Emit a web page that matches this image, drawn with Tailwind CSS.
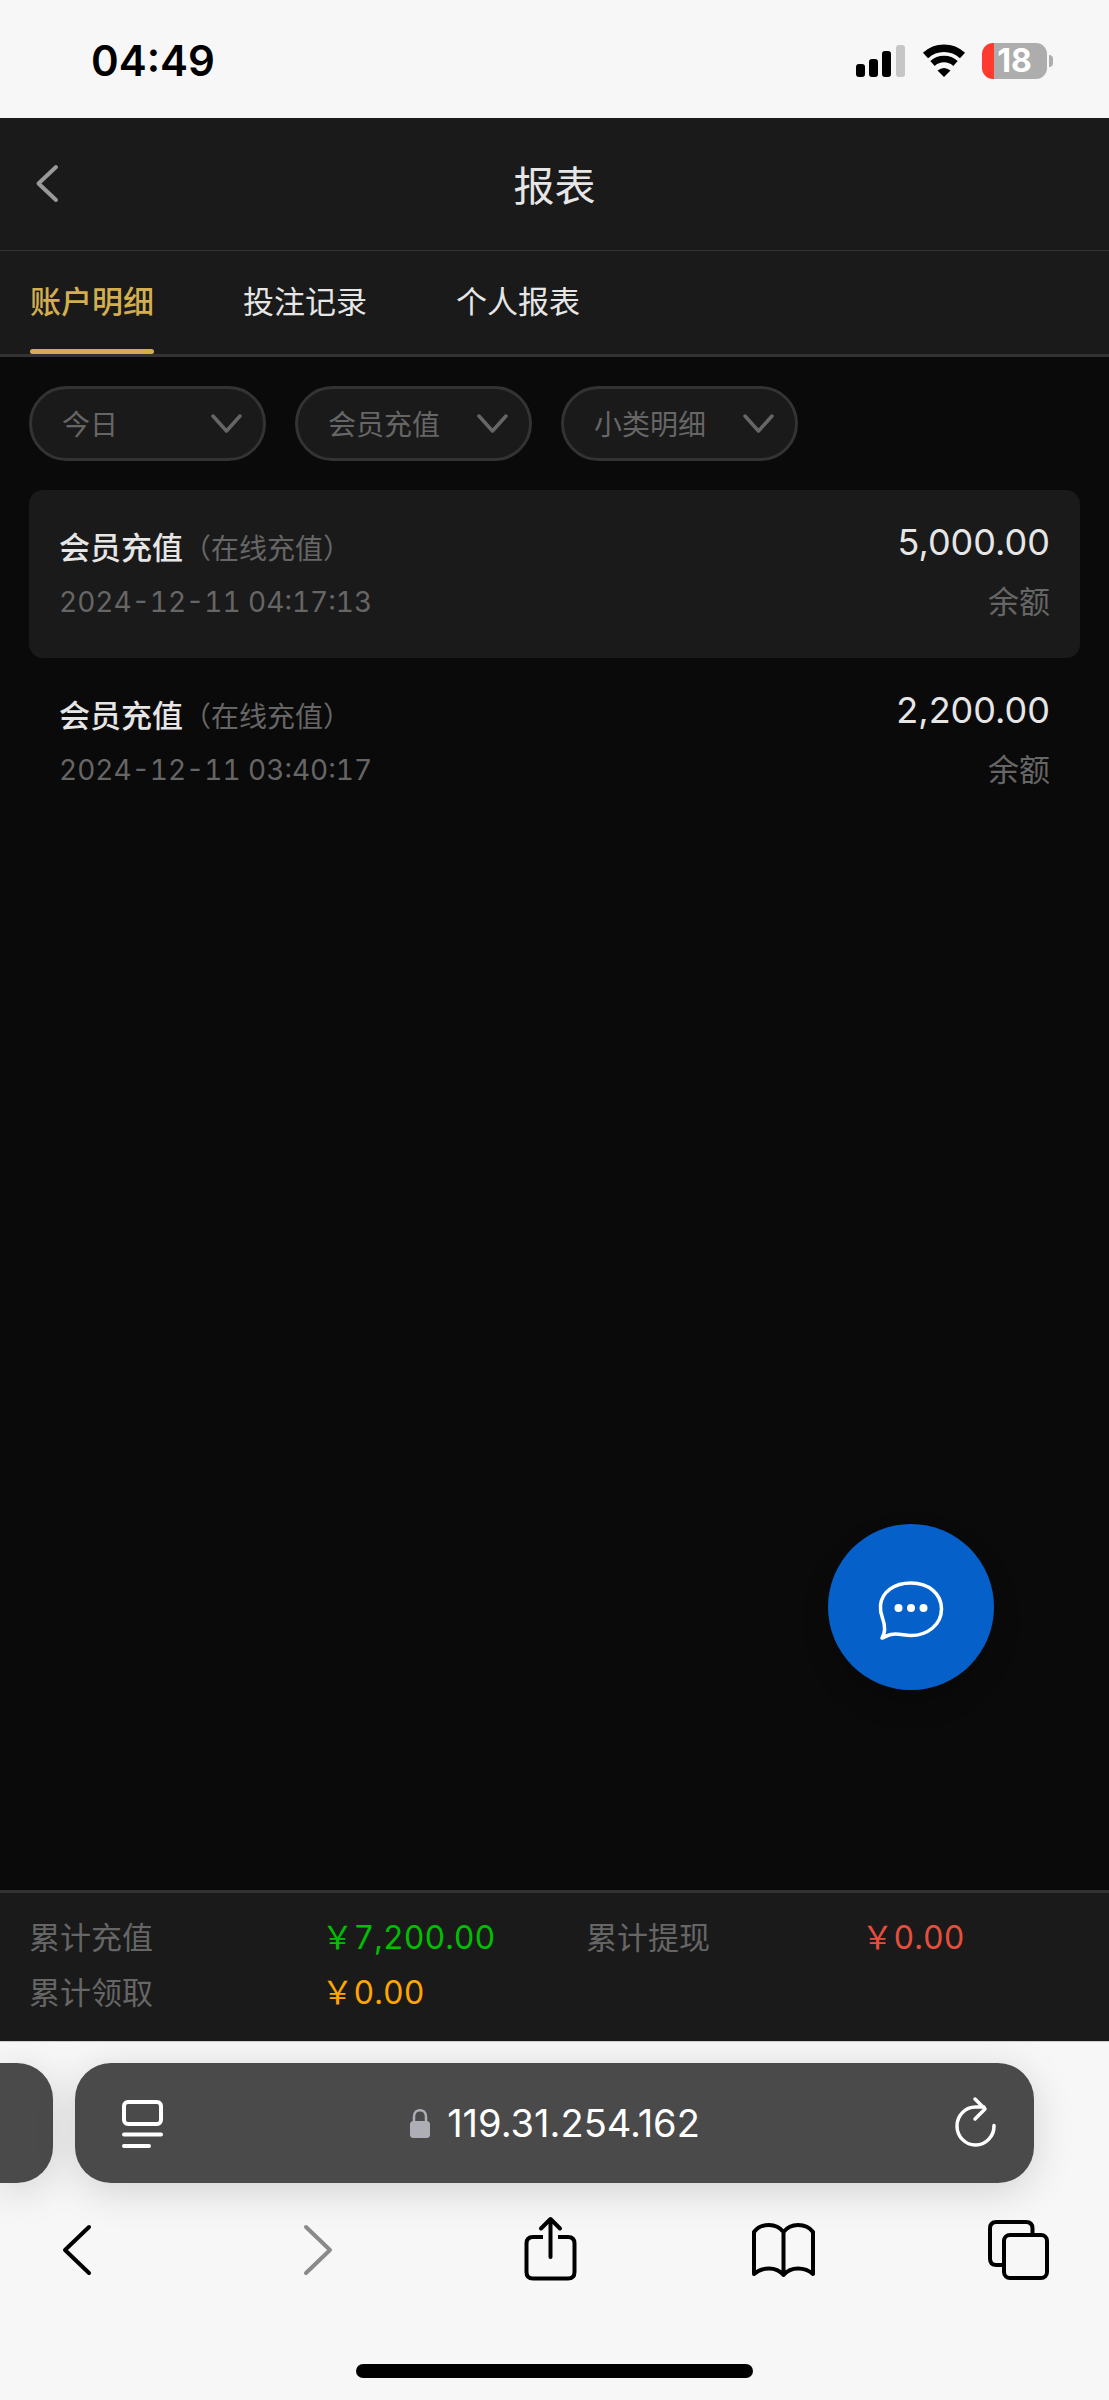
<!DOCTYPE html>
<html lang="zh-CN">
<head>
<meta charset="utf-8">
<meta name="viewport" content="width=device-width, initial-scale=1">
<title>报表</title>
<script src="https://cdn.jsdelivr.net/npm/@tailwindcss/browser@4"></script>
</head>
<body class="flex min-h-screen flex-col overflow-x-hidden bg-[#0a0a0a] font-['Inter','Noto_Sans_CJK_SC',sans-serif] text-[31px] text-[#e6e6e6]">

<!-- Phone status bar -->
<div class="flex h-[118px] items-center justify-between bg-[#f7f7f7] pt-[3px] pr-14 pl-[91px] text-black">
  <time class="text-[42px] leading-[60px] font-semibold">04:49</time>
  <div class="flex items-center gap-4">
    <svg class="h-9 w-[51px]" viewBox="0 0 51 36" aria-label="信号">
      <rect x="1" y="21" width="9" height="13" rx="3"/>
      <rect x="14" y="16" width="9" height="18" rx="3"/>
      <rect x="27" y="8" width="9" height="26" rx="3"/>
      <rect x="41" y="2" width="9" height="32" rx="3" fill="#c6c6c6"/>
    </svg>
    <svg class="h-9 w-11" viewBox="0 0 44 36" aria-label="无线网络">
      <path d="M3.500 12.500A27 27 0 0 1 40.500 12.500" fill="none" stroke="#000" stroke-width="7.500"/>
      <path d="M10.500 20.500A17 17 0 0 1 33.500 20.500" fill="none" stroke="#000" stroke-width="6.500"/>
      <path d="M15.500 27.500Q22 22.500 28.500 27.500L22 34Z"/>
    </svg>
    <div class="flex items-center gap-[2px]">
      <div class="flex h-[36px] w-[65px] items-center justify-center rounded-[11px] bg-linear-to-r from-[#ff3b30] from-18% to-[#adadad] to-18% text-[32px] leading-10 font-bold text-white">18</div>
      <div class="h-3 w-1 rounded-r-full bg-[#adadad]"></div>
    </div>
  </div>
</div>

<!-- Page header -->
<header class="grid h-[133px] grid-cols-[1fr_auto_1fr] items-center border-b border-[#333] bg-[#1a1a1a] px-7">
  <button type="button" aria-label="返回" class="justify-self-start">
    <svg class="h-10 w-10" viewBox="0 0 40 40" fill="none" stroke="#999" stroke-width="4" stroke-linecap="round" stroke-linejoin="round"><path d="M28 3L10.500 19.500L28 36"/></svg>
  </button>
  <h1 class="pt-1 text-[41px] leading-[60px]">报表</h1>
</header>

<nav class="flex h-[106px] gap-[89px] border-b-3 border-[#333] bg-[#1a1a1a] px-[30px] leading-[102px]">
  <a href="#" aria-current="page" class="relative font-medium text-[#d2ae50]">账户明细<span class="absolute inset-x-0 bottom-0 h-[5px] rounded-full bg-[#d2ae50]"></span></a>
  <a href="#">投注记录</a>
  <a href="#">个人报表</a>
</nav>

<main class="relative flex-1 px-[29px] pt-[29px]">
  <form class="flex gap-[29px] text-[28px] text-[#666]">
    <label class="relative">
      <select aria-label="日期" class="h-[75px] w-[237px] appearance-none rounded-full border-3 border-[#333] bg-[#1a1a1a] pt-[2px] pl-[30px]"><option>今日</option></select>
      <svg class="pointer-events-none absolute top-[26px] right-6 h-6 w-8" viewBox="0 0 32 24" fill="none" stroke="#666" stroke-width="3.500" stroke-linecap="round" stroke-linejoin="round"><path d="M3 4L16.500 19L30 4"/></svg>
    </label>
    <label class="relative">
      <select aria-label="类型" class="h-[75px] w-[237px] appearance-none rounded-full border-3 border-[#333] bg-[#1a1a1a] pt-[2px] pl-[30px]"><option>会员充值</option></select>
      <svg class="pointer-events-none absolute top-[26px] right-6 h-6 w-8" viewBox="0 0 32 24" fill="none" stroke="#666" stroke-width="3.500" stroke-linecap="round" stroke-linejoin="round"><path d="M3 4L16.500 19L30 4"/></svg>
    </label>
    <label class="relative">
      <select aria-label="小类" class="h-[75px] w-[237px] appearance-none rounded-full border-3 border-[#333] bg-[#1a1a1a] pt-[2px] pl-[30px]"><option>小类明细</option></select>
      <svg class="pointer-events-none absolute top-[26px] right-6 h-6 w-8" viewBox="0 0 32 24" fill="none" stroke="#666" stroke-width="3.500" stroke-linecap="round" stroke-linejoin="round"><path d="M3 4L16.500 19L30 4"/></svg>
    </label>
  </form>

  <ul class="mt-[29px]">
    <li class="flex h-[168px] justify-between rounded-[14px] bg-[#1a1a1a] px-[30px] pt-6">
      <div class="pt-[7px]">
        <p class="leading-[54px] font-medium">会员充值<span class="text-[28px] font-normal text-[#666]">（在线充值）</span></p>
        <p class="text-[28px] leading-[52px] text-[#666] tabular-nums">2024-12-11 04:17:13</p>
      </div>
      <div class="text-right">
        <p class="text-[36px] leading-[56px]">5,000.00</p>
        <p class="leading-[64px] text-[#666]">余额</p>
      </div>
    </li>
    <li class="flex h-[168px] justify-between rounded-[14px] px-[30px] pt-6">
      <div class="pt-[7px]">
        <p class="leading-[54px] font-medium">会员充值<span class="text-[28px] font-normal text-[#666]">（在线充值）</span></p>
        <p class="text-[28px] leading-[52px] text-[#666] tabular-nums">2024-12-11 03:40:17</p>
      </div>
      <div class="text-right">
        <p class="text-[36px] leading-[56px]">2,200.00</p>
        <p class="leading-[64px] text-[#666]">余额</p>
      </div>
    </li>
  </ul>

  <!-- Floating chat button -->
  <button type="button" aria-label="在线客服" class="absolute right-[115px] bottom-[200px] flex size-[166px] items-center justify-center rounded-full bg-[#0561c9] shadow-[0_14px_28px_rgba(0,0,0,0.2)]">
    <svg class="size-[70px]" viewBox="0 0 70 70" fill="none" stroke="#fff" stroke-width="3.500" stroke-linejoin="round">
      <path d="M6 66C10 60 9 53 6.500 46C4.500 41 4 38 4.500 33C6 20 18 11 35 11C53 11 65.500 22 65.500 37C65.500 53 51 63.500 35 63.500C28 63.500 22 61 15 62.500C11 63.500 9 65 6 66Z"/>
      <g fill="#fff" stroke="none"><circle cx="22.500" cy="36" r="4"/><circle cx="35" cy="36" r="4"/><circle cx="47.500" cy="36" r="4"/></g>
    </svg>
  </button>
</main>

<!-- Totals -->
<footer class="h-[151px] border-t-3 border-[#333] bg-[#1a1a1a] px-[29px] pt-[17px]">
  <dl class="grid grid-cols-[292fr_264fr_275fr_218fr] leading-[55px] text-[#666] tabular-nums">
    <dt>累计充值</dt><dd class="text-[32px] text-[#00bf00]">￥7,200.00</dd>
    <dt>累计提现</dt><dd class="text-[32px] text-[#e84e3c]">￥0.00</dd>
    <dt>累计领取</dt><dd class="text-[32px] text-[#ffa500]">￥0.00</dd>
  </dl>
</footer>

<!-- Browser chrome -->
<div class="h-[359px] overflow-hidden border-t border-[#ccc] bg-[#f7f7f7] pt-[21px] text-black">
  <div class="flex h-[120px] gap-[22px] pr-[75px]">
    <div class="w-[53px] rounded-r-[36px] bg-[#4a4a4a] shadow-[0_8px_40px_rgba(0,0,0,0.15)]"></div>
    <div class="grid flex-1 grid-cols-[1fr_auto_1fr] items-center rounded-[36px] bg-[#4a4a4a] px-9 text-white shadow-[0_8px_40px_rgba(0,0,0,0.15)]">
      <button type="button" aria-label="页面设置" class="justify-self-start">
        <svg class="h-[60px] w-[60px]" viewBox="0 0 60 60" fill="none" stroke="#fff" stroke-width="4" stroke-linecap="round"><rect x="13" y="9" width="37" height="22" rx="4"/><path d="M13 41.500H50M13 53H38"/></svg>
      </button>
      <button type="button" class="flex items-center gap-4 text-[38px] leading-[50px]">
        <svg class="h-[30px] w-[22px]" viewBox="0 0 22 30" fill="none" aria-hidden="true"><rect x="1" y="13" width="20" height="17" rx="3.500" fill="#aeaeb6"/><path d="M5 14V8.500C5 0 17 0 17 8.500V14" stroke="#aeaeb6" stroke-width="2.500"/></svg>
        <span>119.31.254.162</span>
      </button>
      <button type="button" aria-label="刷新" class="justify-self-end">
        <svg class="h-[60px] w-[48px]" viewBox="0 0 48 60" fill="none" stroke="#fff" stroke-width="3.500" stroke-linecap="round" stroke-linejoin="round"><path d="M44 32.500A18.500 19 0 1 1 25.500 14H34M25 6L35 16L25 26"/></svg>
      </button>
    </div>
  </div>
  <div class="mt-[33px] flex justify-between pr-[59px] pl-[45px]">
    <button type="button" aria-label="后退"><svg class="h-[66px] w-16" viewBox="0 0 64 66" fill="none" stroke="#000" stroke-width="4" stroke-linecap="round" stroke-linejoin="round"><path d="M44 11L20 34L44 57"/></svg></button>
    <button type="button" aria-label="前进"><svg class="h-[66px] w-16" viewBox="0 0 64 66" fill="none" stroke="#8a8a8a" stroke-width="4" stroke-linecap="round" stroke-linejoin="round"><path d="M26 11L50 34L26 57"/></svg></button>
    <button type="button" aria-label="分享"><svg class="h-[66px] w-16" viewBox="0 0 64 66" fill="none" stroke="#000" stroke-width="4" stroke-linejoin="round"><path d="M27 21H17Q10.500 21 10.500 27.500V56Q10.500 62.500 17 62.500H52Q58.500 62.500 58.500 56V27.500Q58.500 21 52 21H42"/><path d="M34.500 41V3M25 12.500L34.500 3L44 12.500" stroke-linecap="round"/></svg></button>
    <button type="button" aria-label="书签"><svg class="h-[66px] w-16" viewBox="0 0 64 66" fill="none" stroke="#000" stroke-width="4" stroke-linecap="round" stroke-linejoin="round"><path d="M32.500 16Q27 9 18 9Q8 9 3 16V58Q9 52.500 18 52.500Q27 52.500 32.500 59Q38 52.500 47 52.500Q56 52.500 62 58V16Q57 9 47 9Q38 9 32.500 16V59"/></svg></button>
    <button type="button" aria-label="标签页"><svg class="h-[66px] w-16" viewBox="0 0 64 66" fill="none" stroke="#000" stroke-width="4"><path d="M17 49H10.500Q4 49 4 42.500V12.500Q4 6 10.500 6H40Q46.500 6 46.500 12.500V19"/><rect x="18" y="19" width="43" height="43" rx="6"/></svg></button>
  </div>
  <div class="mx-auto mt-[82px] h-[14px] w-[397px] rounded-full bg-black"></div>
</div>
</body>
</html>
